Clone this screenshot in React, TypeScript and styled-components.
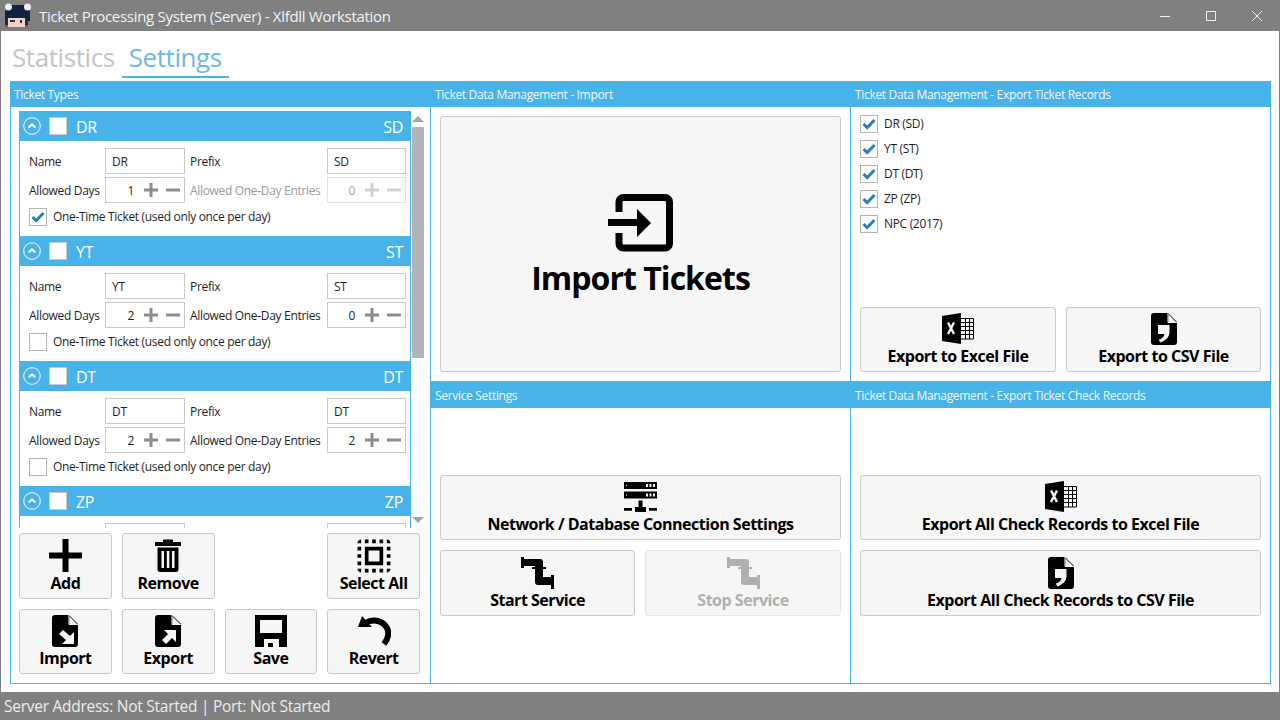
import React from 'react';
import styled, { createGlobalStyle } from 'styled-components';
import { MdSelectAll } from 'react-icons/md';

const BLUE = '#48b3e8';

const GlobalStyle = createGlobalStyle`
  html, body {
    margin: 0;
    padding: 0;
    height: 100%;
    overflow: hidden;
    background: #fff;
    font-family: 'Open Sans', 'Noto Sans', sans-serif;
    letter-spacing: -0.02em;
  }
  #root { height: 100%; }
  * { box-sizing: border-box; }
`;

const Window = styled.div`
  width: 1280px;
  height: 720px;
  display: flex;
  flex-direction: column;
`;

const TitleBar = styled.header`
  height: 31px;
  flex: none;
  display: flex;
  align-items: center;
  background: #808080;
  color: #eef4f8;
  font-size: 15px;
  letter-spacing: -0.02em;
`;

const LogoBox = styled.div`
  width: 39px;
  height: 31px;
  flex: none;
`;

const TitleText = styled.div`
  flex: 1;
`;

const WinButton = styled.div`
  width: 46px;
  height: 31px;
  display: flex;
  align-items: center;
  justify-content: center;
`;

const Body = styled.main`
  flex: 1;
  min-height: 0;
  display: flex;
  flex-direction: column;
  padding: 0 8px 8px 9px;
  border-left: 1px solid #808080;
  border-right: 1px solid #808080;
  background: #fff;
`;

const Tabs = styled.nav`
  height: 50px;
  flex: none;
  display: flex;
  margin-left: -5px;
`;

const Tab = styled.div<{ $active?: boolean }>`
  height: 47px;
  padding: 7px 7px 0;
  font-size: 26px;
  letter-spacing: -0.016em;
  line-height: 38px;
  color: ${p => (p.$active ? '#6cb9e8' : '#c4c4c4')};
  border-bottom: 2px solid ${p => (p.$active ? BLUE : 'transparent')};
`;

const Board = styled.div`
  flex: 1;
  min-height: 0;
  display: grid;
  grid-template-columns: 420px 420px 421px;
  grid-template-rows: 300px 1fr;
  border-bottom: 1px solid ${BLUE};
`;

const Panel = styled.section<{ $span?: boolean; $last?: boolean }>`
  display: flex;
  flex-direction: column;
  min-height: 0;
  border-left: 1px solid ${BLUE};
  border-right: ${p => (p.$last ? `1px solid ${BLUE}` : 'none')};
  grid-row: ${p => (p.$span ? '1 / span 2' : 'auto')};
`;

const PanelHead = styled.div<{ $tall?: boolean; $first?: boolean }>`
  height: ${p => (p.$tall ? 27 : 26)}px;
  flex: none;
  padding: ${p => (p.$tall ? 1 : 0)}px 0 0 ${p => (p.$first ? 3 : 4)}px;
  display: flex;
  align-items: center;
  background: ${BLUE};
  color: #f2f8fc;
  font-size: 12px;
`;

const LeftBody = styled.div`
  flex: 1;
  display: flex;
  flex-direction: column;
  padding: 4px 10px 0 8px;
`;

const ListRow = styled.div`
  height: 417px;
  flex: none;
  display: flex;
  margin-right: -4px;
`;

const ListView = styled.div`
  width: 392px;
  overflow: hidden;
  flex: none;
`;

const Scroll = styled.div`
  width: 12px;
  margin-left: 1px;
  flex: none;
  display: flex;
  flex-direction: column;
  align-items: stretch;
`;

const ScrollArrow = styled.div<{ $down?: boolean }>`
  height: 6px;
  margin: ${p => (p.$down ? '159px 0 0' : '5px 0 5px')};
  background: #a4a4a4;
  clip-path: ${p => (p.$down ? 'polygon(0 0, 100% 0, 50% 100%)' : 'polygon(50% 0, 100% 100%, 0 100%)')};
`;

const ScrollThumb = styled.div`
  height: 231px;
  flex: none;
  background: #b4b4b4;
`;

const ItemHead = styled.div`
  height: 30px;
  display: flex;
  align-items: center;
  padding: 0 8px 0 4px;
  background: ${BLUE};
  color: #fff;
  font-size: 16px;
`;

const ItemName = styled.span`
  flex: 1;
  margin-left: 9px;
  padding-top: 2px;
`;

const ItemPrefix = styled.span`
  padding-top: 2px;
`;

const HeadBox = styled.div`
  width: 18px;
  height: 18px;
  margin-left: 8px;
  background: #fff;
  border: 1px solid #c8c8c8;
`;

const ItemBody = styled.div`
  height: 95px;
  padding: 7px 4px 0 9px;
  border-left: 1px solid ${BLUE};
  border-right: 1px solid ${BLUE};
  display: grid;
  grid-template-columns: 76px 80px 142px 79px;
  grid-auto-rows: 26px;
  row-gap: 3px;
  font-size: 12px;
  color: #1e1e1e;
`;

const FieldLabel = styled.label<{ $off?: boolean; $second?: boolean }>`
  display: flex;
  align-items: center;
  padding-left: ${p => (p.$second ? 5 : 0)}px;
  color: ${p => (p.$off ? '#9a9a9a' : 'inherit')};
`;

const TextField = styled.input`
  width: 100%;
  height: 26px;
  padding: 0 6px;
  border: 1px solid #c8c8c8;
  background: #fff;
  color: #1e1e1e;
  font: inherit;
  letter-spacing: inherit;
  outline: none;
`;

const Stepper = styled.div<{ $off?: boolean }>`
  height: 26px;
  display: flex;
  align-items: center;
  border: 1px solid ${p => (p.$off ? '#e0e0e0' : '#c8c8c8')};
  color: ${p => (p.$off ? '#a8a8a8' : '#1e1e1e')};
  padding-right: 4px;
`;

const StepValue = styled.span`
  flex: 1;
  text-align: right;
  padding-right: 10px;
`;

const StepIcon = styled.svg<{ $off?: boolean }>`
  width: 14px;
  height: 14px;
  margin-left: 8px;
  flex: none;
  fill: ${p => (p.$off ? '#d0d0d0' : '#8c8c8c')};
  &:first-of-type { margin-left: 0; }
`;

const CheckRow = styled.label`
  grid-column: 1 / -1;
  display: flex;
  align-items: flex-start;
  gap: 6px;
  height: 26px;
  margin-top: 2px;
  line-height: 18px;
`;

const CheckBox = styled.span`
  width: 18px;
  height: 18px;
  flex: none;
  display: flex;
  align-items: center;
  justify-content: center;
  background: #fff;
  border: 1px solid #b4b4b4;
`;

const ButtonGrid = styled.div`
  display: grid;
  grid-template-columns: repeat(4, 1fr);
  grid-template-rows: 66px 65px;
  gap: 10px;
  margin-top: 5px;
`;

const ActionButton = styled.button<{ $off?: boolean; $col?: number; $row?: number; $h?: number; $tight?: boolean }>`
  display: flex;
  flex-direction: column;
  align-items: center;
  padding: ${p => (p.$tight ? 4 : 5)}px 0 0;
  height: ${p => (p.$h ? `${p.$h}px` : 'auto')};
  grid-column: ${p => p.$col ?? 'auto'};
  grid-row: ${p => p.$row ?? 'auto'};
  background: #f6f6f6;
  border: 1px solid ${p => (p.$off ? '#e6e6e6' : '#c8c8c8')};
  border-radius: 3px;
  color: ${p => (p.$off ? '#b0b0b0' : '#000')};
  font-family: inherit;
  font-size: 16px;
  font-weight: 700;
  letter-spacing: -0.03em;
`;

const ButtonLabel = styled.span`
  display: block;
  line-height: 22px;
  white-space: nowrap;
`;

const IconSlot = styled.span`
  height: 33px;
  display: flex;
  align-items: center;
  justify-content: center;
  color: inherit;
`;

const PadBody = styled.div`
  flex: 1;
  min-height: 0;
  display: flex;
  padding: 9px;
`;

const ImportButton = styled.button`
  flex: 1;
  display: flex;
  flex-direction: column;
  align-items: center;
  justify-content: center;
  gap: 6px;
  padding: 4px 0 0;
  background: #f6f6f6;
  border: 1px solid #c8c8c8;
  border-radius: 3px;
  color: #000;
  font-family: inherit;
  font-size: 32px;
  font-weight: 700;
  letter-spacing: -0.03em;
  line-height: 40px;
`;

const ExportBody = styled.div`
  flex: 1;
  display: flex;
  flex-direction: column;
  padding: 8px 9px 9px;
`;

const ExportList = styled.div`
  flex: 1;
  display: flex;
  flex-direction: column;
  gap: 7px;
  font-size: 12px;
  color: #1e1e1e;
`;

const ExportRow = styled.label`
  display: flex;
  align-items: flex-start;
  gap: 6px;
  height: 18px;
  line-height: 18px;
`;

const TwoCols = styled.div<{ $cols: string }>`
  display: grid;
  grid-template-columns: ${p => p.$cols};
  gap: 10px;
`;

const CenterBody = styled.div`
  flex: 1;
  display: flex;
  flex-direction: column;
  justify-content: center;
  gap: 10px;
  padding: 0 9px;
`;

const StatusBar = styled.footer`
  height: 28px;
  flex: none;
  padding-left: 4px;
  display: flex;
  align-items: center;
  background: #808080;
  color: #ececec;
  font-size: 15.5px;
  letter-spacing: -0.017em;
`;

const Logo = () => (
  <svg width="39" height="31" viewBox="0 0 39 31">
    <path d="M5 12Q5 6 12 5H23Q30 6 30 12V21H5Z" fill="#0f2340" />
    <circle cx="8.500" cy="7" r="3.500" fill="#eeeeee" />
    <circle cx="27.500" cy="7" r="3.500" fill="#eeeeee" />
    <rect x="7" y="18" width="19" height="9" fill="#efd3c8" />
    <rect x="5" y="18" width="3" height="7" fill="#1e2c40" />
    <rect x="25" y="18" width="3" height="7" fill="#1e2c40" />
    <rect x="10" y="20" width="5" height="2" fill="#333" />
    <rect x="20" y="20" width="2" height="3" fill="#333" />
    <rect x="5" y="25" width="3" height="2" fill="#c83c3c" />
    <rect x="25" y="25" width="3" height="2" fill="#c83c3c" />
  </svg>
);

const Tick = () => (
  <svg width="14" height="12" viewBox="0 0 14 12">
    <path d="M1.500 6 L5.200 9.600 L12.500 2" fill="none" stroke="#2a80b0" strokeWidth="3" />
  </svg>
);

const Chevron = () => (
  <svg width="18" height="18" viewBox="0 0 18 18">
    <circle cx="9" cy="9" r="8.300" fill="none" stroke="#fff" strokeWidth="1" />
    <path d="M5.600 10.600 L9 7.400 L12.400 10.600" fill="none" stroke="#fff" strokeWidth="2" />
  </svg>
);

const PlusMini = ({ off }: { off?: boolean }) => (
  <StepIcon $off={off} viewBox="0 0 14 14"><path d="M5.500 0h3v5.500H14v3H8.500V14h-3V8.500H0v-3h5.500z" /></StepIcon>
);

const MinusMini = ({ off }: { off?: boolean }) => (
  <StepIcon $off={off} viewBox="0 0 14 14"><path d="M0 5.500h14v3H0z" /></StepIcon>
);

const ImportArrow = () => (
  <svg width="65" height="58" viewBox="0 0 65 58">
    <path d="M11 18V8a4.500 4.500 0 0 1 4.500-4.500H57a4.500 4.500 0 0 1 4.500 4.500v41.500a4.500 4.500 0 0 1-4.500 4.500H15.500a4.500 4.500 0 0 1-4.500-4.500V39" fill="none" stroke="currentColor" strokeWidth="7" />
    <path d="M0 25h29V15l14 14-14 14V32H0z" fill="currentColor" />
  </svg>
);

const PlusIcon = () => (
  <svg width="33" height="33" viewBox="0 0 33 33"><path d="M13.500 0h6v13.500H33v6H19.500V33h-6V19.500H0v-6h13.500z" fill="currentColor" /></svg>
);

const TrashIcon = () => (
  <svg width="26" height="33" viewBox="0 0 26 33" fill="currentColor">
    <path d="M9 0.500h8a1 1 0 0 1 1 1V3h8v4H0V3h8V1.500a1 1 0 0 1 1-1z" />
    <path fillRule="evenodd" d="M2.500 8.500h21V30a3 3 0 0 1-3 3h-15a3 3 0 0 1-3-3zM6.500 12v17h2.500V12zM11.800 12v17h2.500V12zM17 12v17h2.500V12z" />
  </svg>
);

const SelectIcon = styled(MdSelectAll)`
  width: 44px;
  height: 44px;
  margin: -6px 0;
`;

const DOC = 'M4 0H17L26 9V29A3 3 0 0 1 23 32H3A3 3 0 0 1 0 29V3A3 3 0 0 1 3 0Z';

const DocIcon = ({ children }: { children: React.ReactNode }) => (
  <svg width="26" height="32" viewBox="0 0 26 32">
    <path d={DOC} fill="currentColor" />
    <path d="M17.500 1.500V9H25z" fill="#f6f6f6" />
    <path d="M17 0v9.500h9" fill="none" stroke="#f6f6f6" strokeWidth="1" />
    {children}
  </svg>
);

const FileImportIcon = () => (
  <DocIcon><path d="M22 29H10L14 25L7 19L11 15L18 21L22 17Z" fill="#f6f6f6" /></DocIcon>
);

const FileExportIcon = () => (
  <DocIcon><path d="M21 15V27L17 23L11 29L7 25L13 19L9 15Z" fill="#f6f6f6" /></DocIcon>
);

const FileCsvIcon = () => (
  <DocIcon><path d="M7 12H18.500V19C18.500 24 15 27.500 9 29.500L8 26.500C11 25.500 13 24 13.500 21H7Z" fill="#f6f6f6" /></DocIcon>
);

const SaveIcon = () => (
  <svg width="32" height="32" viewBox="0 0 32 32">
    <path fillRule="evenodd" fill="currentColor" d="M0 0H32V32H24V24H9V32H0ZM5 5V18H27V5Z" />
    <rect x="13" y="28" width="5" height="4" fill="currentColor" />
  </svg>
);

const RevertIcon = () => (
  <svg width="34" height="30" viewBox="0 0 34 30">
    <path d="M1 11L5 0l10 11z" fill="currentColor" />
    <path d="M8 7c9-5 18-2 22 5 3 6 0 12-3 16" fill="none" stroke="currentColor" strokeWidth="6" />
  </svg>
);

const ExcelIcon = () => (
  <svg width="32" height="31" viewBox="0 0 32 31">
    <path d="M0 3L19 0V31L0 28Z" fill="currentColor" />
    <path d="M6 9.500L12 21M12 9.500L6 21" stroke="#f6f6f6" strokeWidth="2.400" fill="none" />
    <path d="M19 5.500H31.500V26H19M19 9.500H31.500M19 13.500H31.500M19 17.500H31.500M19 21.500H31.500M23.500 5.500V26M27.500 5.500V26" stroke="currentColor" strokeWidth="1" fill="none" />
  </svg>
);

const NetworkSvg = styled.svg`
  margin-top: 1px;
`;

const NetworkIcon = () => (
  <NetworkSvg width="33" height="30" viewBox="0 0 33 30">
    <path fill="currentColor" fillRule="evenodd" d="M0 0H33V7H0ZM2 3V4H3V3ZM22 2V5H24V2ZM25.500 2V5H27.500V2ZM29 2V5H31V2Z" />
    <path fill="currentColor" fillRule="evenodd" d="M0 9.500H33V16.500H0ZM2 12.500V13.500H3V12.500ZM22 11.500V14.500H24V11.500ZM25.500 11.500V14.500H27.500V11.500ZM29 11.500V14.500H31V11.500Z" />
    <path fill="currentColor" d="M14.500 18.500H18.500V25H22V30H11V25H14.500ZM0 26H8V28.800H0ZM25 26H33V28.800H25Z" />
  </NetworkSvg>
);

const PipeIcon = () => (
  <svg width="33" height="32" viewBox="0 0 33 32" fill="currentColor">
    <path d="M0 0H3V2H19a3 3 0 0 1 3 3V10H25V12H22V20H30V18H33V32H30V28H17a3 3 0 0 1-3-3V12H11V10H14V9H3V11H0Z" />
  </svg>
);

type Ticket = { name: string; prefix: string; days: number; entries: number; once: boolean };

const tickets: Ticket[] = [
  { name: 'DR', prefix: 'SD', days: 1, entries: 0, once: true },
  { name: 'YT', prefix: 'ST', days: 2, entries: 0, once: false },
  { name: 'DT', prefix: 'DT', days: 2, entries: 2, once: false },
];

const exportTypes = ['DR (SD)', 'YT (ST)', 'DT (DT)', 'ZP (ZP)', 'NPC (2017)'];

const ItemHeader = ({ name, prefix }: { name: string; prefix: string }) => (
  <ItemHead>
    <Chevron />
    <HeadBox />
    <ItemName>{name}</ItemName>
    <ItemPrefix>{prefix}</ItemPrefix>
  </ItemHead>
);

const TicketItem = ({ t }: { t: Ticket }) => (
  <div>
    <ItemHeader name={t.name} prefix={t.prefix} />
    <ItemBody>
      <FieldLabel>Name</FieldLabel>
      <TextField readOnly value={t.name} />
      <FieldLabel $second>Prefix</FieldLabel>
      <TextField readOnly value={t.prefix} />
      <FieldLabel>Allowed Days</FieldLabel>
      <Stepper>
        <StepValue>{t.days}</StepValue>
        <PlusMini />
        <MinusMini />
      </Stepper>
      <FieldLabel $second $off={t.once}>Allowed One-Day Entries</FieldLabel>
      <Stepper $off={t.once}>
        <StepValue>{t.entries}</StepValue>
        <PlusMini off={t.once} />
        <MinusMini off={t.once} />
      </Stepper>
      <CheckRow>
        <CheckBox>{t.once && <Tick />}</CheckBox>
        One-Time Ticket (used only once per day)
      </CheckRow>
    </ItemBody>
  </div>
);

// last item is scrolled out of the list, only the top edge of its fields shows
const ClippedItem = () => (
  <div>
    <ItemHeader name="ZP" prefix="ZP" />
    <ItemBody>
      <FieldLabel />
      <TextField readOnly />
      <FieldLabel />
      <TextField readOnly />
    </ItemBody>
  </div>
);

const App = () => (
  <Window>
    <GlobalStyle />
    <TitleBar>
      <LogoBox><Logo /></LogoBox>
      <TitleText>Ticket Processing System (Server) - Xlfdll Workstation</TitleText>
      <WinButton>
        <svg width="10" height="10" viewBox="0 0 10 10"><path d="M0 5.500H10" stroke="#eee" /></svg>
      </WinButton>
      <WinButton>
        <svg width="10" height="10" viewBox="0 0 10 10"><rect x=".5" y=".5" width="9" height="9" fill="none" stroke="#eee" /></svg>
      </WinButton>
      <WinButton>
        <svg width="10" height="10" viewBox="0 0 10 10"><path d="M0 0L10 10M10 0L0 10" stroke="#eee" /></svg>
      </WinButton>
    </TitleBar>
    <Body>
      <Tabs>
        <Tab>Statistics</Tab>
        <Tab $active>Settings</Tab>
      </Tabs>
      <Board>
        <Panel $span>
          <PanelHead $first>Ticket Types</PanelHead>
          <LeftBody>
            <ListRow>
              <ListView>
                {tickets.map(t => <TicketItem key={t.name} t={t} />)}
                <ClippedItem />
              </ListView>
              <Scroll>
                <ScrollArrow />
                <ScrollThumb />
                <ScrollArrow $down />
              </Scroll>
            </ListRow>
            <ButtonGrid>
              <ActionButton $col={1} $row={1}><IconSlot><PlusIcon /></IconSlot><ButtonLabel>Add</ButtonLabel></ActionButton>
              <ActionButton $col={2} $row={1}><IconSlot><TrashIcon /></IconSlot><ButtonLabel>Remove</ButtonLabel></ActionButton>
              <ActionButton $col={4} $row={1}><IconSlot><SelectIcon /></IconSlot><ButtonLabel>Select All</ButtonLabel></ActionButton>
              <ActionButton $col={1} $row={2} $tight><IconSlot><FileImportIcon /></IconSlot><ButtonLabel>Import</ButtonLabel></ActionButton>
              <ActionButton $col={2} $row={2} $tight><IconSlot><FileExportIcon /></IconSlot><ButtonLabel>Export</ButtonLabel></ActionButton>
              <ActionButton $col={3} $row={2} $tight><IconSlot><SaveIcon /></IconSlot><ButtonLabel>Save</ButtonLabel></ActionButton>
              <ActionButton $col={4} $row={2} $tight><IconSlot><RevertIcon /></IconSlot><ButtonLabel>Revert</ButtonLabel></ActionButton>
            </ButtonGrid>
          </LeftBody>
        </Panel>
        <Panel>
          <PanelHead>Ticket Data Management - Import</PanelHead>
          <PadBody>
            <ImportButton><ImportArrow />Import Tickets</ImportButton>
          </PadBody>
        </Panel>
        <Panel $last>
          <PanelHead>Ticket Data Management - Export Ticket Records</PanelHead>
          <ExportBody>
            <ExportList>
              {exportTypes.map(x => (
                <ExportRow key={x}><CheckBox><Tick /></CheckBox>{x}</ExportRow>
              ))}
            </ExportList>
            <TwoCols $cols="196px 195px">
              <ActionButton $h={65} $tight><IconSlot><ExcelIcon /></IconSlot><ButtonLabel>Export to Excel File</ButtonLabel></ActionButton>
              <ActionButton $h={65} $tight><IconSlot><FileCsvIcon /></IconSlot><ButtonLabel>Export to CSV File</ButtonLabel></ActionButton>
            </TwoCols>
          </ExportBody>
        </Panel>
        <Panel>
          <PanelHead $tall>Service Settings</PanelHead>
          <CenterBody>
            <ActionButton $h={65} $tight><IconSlot><NetworkIcon /></IconSlot><ButtonLabel>Network / Database Connection Settings</ButtonLabel></ActionButton>
            <TwoCols $cols="195px 196px">
              <ActionButton $h={66}><IconSlot><PipeIcon /></IconSlot><ButtonLabel>Start Service</ButtonLabel></ActionButton>
              <ActionButton $h={66} $off><IconSlot><PipeIcon /></IconSlot><ButtonLabel>Stop Service</ButtonLabel></ActionButton>
            </TwoCols>
          </CenterBody>
        </Panel>
        <Panel $last>
          <PanelHead $tall>Ticket Data Management - Export Ticket Check Records</PanelHead>
          <CenterBody>
            <ActionButton $h={65} $tight><IconSlot><ExcelIcon /></IconSlot><ButtonLabel>Export All Check Records to Excel File</ButtonLabel></ActionButton>
            <ActionButton $h={66}><IconSlot><FileCsvIcon /></IconSlot><ButtonLabel>Export All Check Records to CSV File</ButtonLabel></ActionButton>
          </CenterBody>
        </Panel>
      </Board>
    </Body>
    <StatusBar>Server Address: Not Started | Port: Not Started</StatusBar>
  </Window>
);

export default App;
